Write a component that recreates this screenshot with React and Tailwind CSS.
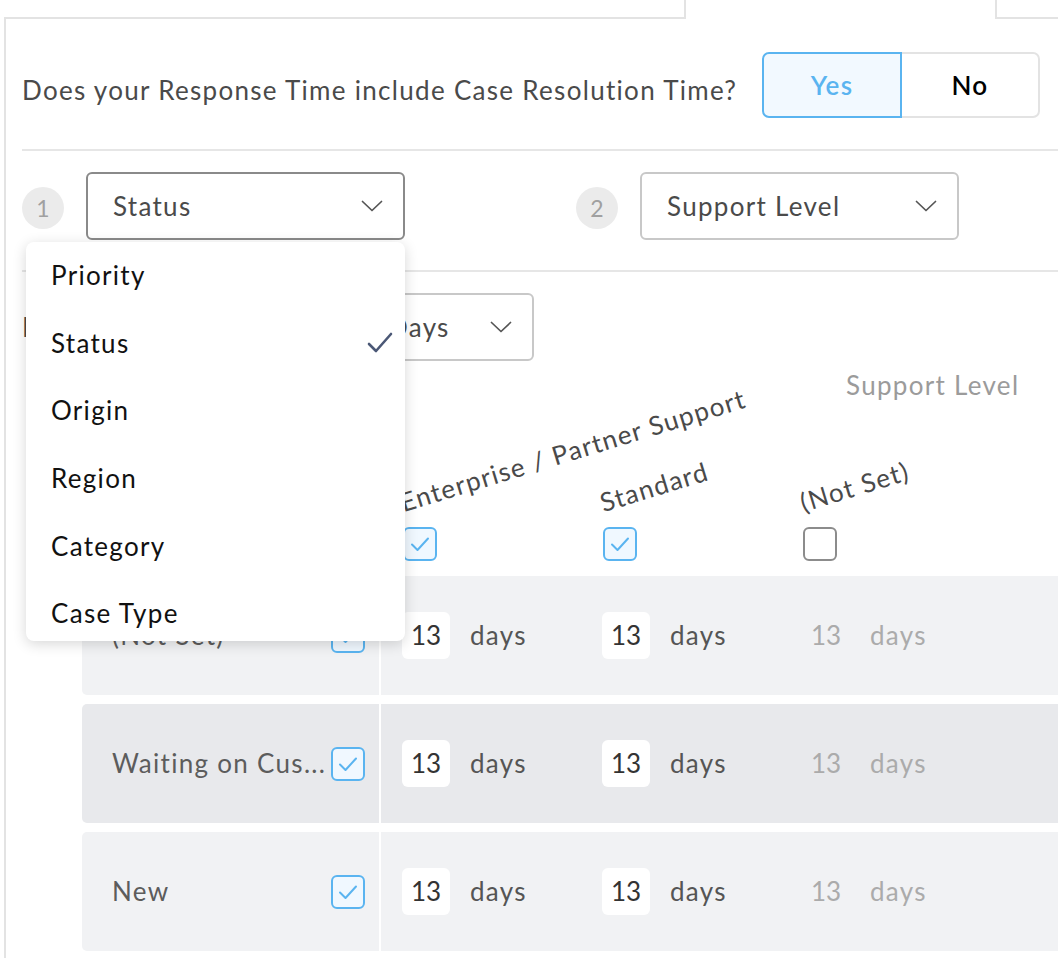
import React from "react";

const menuItems = ["Priority", "Status", "Origin", "Region", "Category", "Case Type"];

const rows = [
  { label: "(Not Set)", bg: "bg-[#f1f2f4]" },
  { label: "Waiting on Cus...", bg: "bg-[#e8e9ec]" },
  { label: "New", bg: "bg-[#f1f2f4]" },
];

function Chevron() {
  return (
    <svg width="22" height="12" viewBox="0 0 22 12" fill="none">
      <polyline points="1.5,1.5 11,10.5 20.5,1.5" stroke="#555" strokeWidth="1.7" strokeLinecap="round" strokeLinejoin="round" />
    </svg>
  );
}

function Checkbox({ checked }) {
  return checked ? (
    <div className="w-[34px] h-[34px] rounded-[6px] border-2 border-[#5ab4f0] bg-[#f0f8ff] flex items-center justify-center">
      <svg width="22" height="18" viewBox="0 0 22 18" fill="none">
        <polyline points="3,9.5 8.5,15 19,3.5" stroke="#5ab4f0" strokeWidth="2" strokeLinecap="round" strokeLinejoin="round" />
      </svg>
    </div>
  ) : (
    <div className="w-[34px] h-[34px] rounded-[6px] border-2 border-[#8c8c8c] bg-white" />
  );
}

function Step({ n }) {
  return (
    <div className="w-[42px] h-[42px] rounded-full bg-[#ebebeb] text-[#a0a0a0] text-[23px] tracking-normal flex items-center justify-center mt-[4px]">
      {n}
    </div>
  );
}

function DaysCell({ disabled }) {
  return (
    <div className="w-[200px] flex items-center">
      <div
        className={
          disabled
            ? "w-[48px] h-[47px] rounded-[6px] text-[#ababab] flex items-center justify-center tracking-normal"
            : "w-[48px] h-[47px] rounded-[6px] bg-white text-[#333] flex items-center justify-center tracking-normal"
        }
      >
        13
      </div>
      <span className={disabled ? "ml-[20px] text-[#ababab]" : "ml-[20px] text-[#555]"}>days</span>
    </div>
  );
}

export default function App() {
  return (
    <div className="w-[1058px] h-[958px] overflow-hidden bg-white font-['Lato',sans-serif] text-[26px] tracking-[1.3px]">
      {/* tabs */}
      <div className="flex h-[19px] ml-[4px]">
        <div className="w-[680px] border-b-2 border-[#e3e3e3]" />
        <div className="w-[313px] border-x-2 border-[#e3e3e3]" />
        <div className="flex-1 border-b-2 border-[#e3e3e3]" />
      </div>

      <div className="ml-[4px] h-[939px] border-l-2 border-[#e3e3e3] pl-[16px]">
        {/* question */}
        <div className="flex items-center justify-between pt-[33px] pb-[31px] border-b-2 border-[#e6e6e6]">
          <span className="text-[#4a4a4a] mt-[10px] whitespace-nowrap">Does your Response Time include Case Resolution Time?</span>
          <div className="flex mr-[18px] h-[66px] shrink-0">
            <div className="w-[140px] rounded-l-[7px] border-2 border-[#5ab4f0] bg-[#f2f9ff] text-[#5ab4f0] font-semibold flex items-center justify-center">
              Yes
            </div>
            <div className="w-[138px] rounded-r-[7px] border-2 border-l-0 border-[#e3e3e3] text-black font-semibold flex items-center justify-center">
              No
            </div>
          </div>
        </div>

        {/* grouping selects */}
        <div className="flex items-center pt-[21px] pb-[30px] border-b-2 border-[#e6e6e6]">
          <Step n={1} />
          <div className="relative ml-[22px]">
            <div className="w-[319px] h-[68px] rounded-[6px] border-2 border-[#8a8a8a] flex items-center justify-between pl-[25px] pr-[20px] text-[#4a4a4a]">
              Status
              <Chevron />
            </div>
            {/* open menu */}
            <div className="absolute z-10 left-[-60px] top-[70px] w-[379px] h-[399px] overflow-hidden bg-white rounded-[8px] shadow-[0_3px_14px_rgba(0,0,0,0.16)]">
              {menuItems.map((item) => (
                <div key={item} className="h-[67.6px] flex items-center justify-between pl-[25px] pr-[12px] text-[#111]">
                  {item}
                  {item === "Status" && (
                    <svg width="26" height="22" viewBox="0 0 26 22" fill="none">
                      <polyline points="2,12 9,19 24,2" stroke="#4b5876" strokeWidth="2.6" strokeLinecap="round" strokeLinejoin="round" />
                    </svg>
                  )}
                </div>
              ))}
            </div>
          </div>
          <div className="ml-[171px]">
            <Step n={2} />
          </div>
          <div className="ml-[22px] w-[319px] h-[68px] rounded-[6px] border-2 border-[#c8c8c8] flex items-center justify-between pl-[25px] pr-[20px] text-[#4a4a4a]">
            Support Level
            <Chevron />
          </div>
        </div>

        {/* unit */}
        <div className="flex items-center pt-[21px]">
          <span className="w-[337px] text-[#4a4a4a]">Display in</span>
          <div className="w-[175px] h-[68px] rounded-[6px] border-2 border-[#c8c8c8] flex items-center justify-between pl-[27px] pr-[20px] text-[#4a4a4a]">
            Days
            <Chevron />
          </div>
        </div>

        <div className="pl-[824px] mt-[9px] h-[30px] leading-[30px] text-[#9b9b9b] whitespace-nowrap">Support Level</div>

        {/* rotated column headers */}
        <div className="flex pl-[383px] h-[117px] items-end">
          {["Enterprise / Partner Support", "Standard", "(Not Set)"].map((h) => (
            <div key={h} className="w-[200px] h-0">
              <div className="whitespace-nowrap text-[#4a4a4a] origin-bottom-left -rotate-[17deg] -translate-y-full leading-[30px]">
                {h}
              </div>
            </div>
          ))}
        </div>
        <div className="flex pl-[381px] mt-[10px] mb-[15px]">
          <div className="w-[200px]"><Checkbox checked /></div>
          <div className="w-[200px]"><Checkbox checked /></div>
          <div className="w-[200px]"><Checkbox /></div>
        </div>

        {/* rows */}
        <div className="ml-[60px] flex flex-col gap-[9px]">
          {rows.map((r) => (
            <div key={r.label} className={"flex h-[119px] rounded-l-[5px] " + r.bg}>
              <div className="w-[297px] flex items-center justify-between pl-[30px] pr-[14px] text-[#5c5c5c]">
                <span className="whitespace-nowrap">{r.label}</span>
                <Checkbox checked />
              </div>
              <div className="w-[2px] bg-white" />
              <div className="flex-1 flex items-center pl-[21px]">
                <DaysCell />
                <DaysCell />
                <DaysCell disabled />
              </div>
            </div>
          ))}
        </div>
      </div>
    </div>
  );
}
